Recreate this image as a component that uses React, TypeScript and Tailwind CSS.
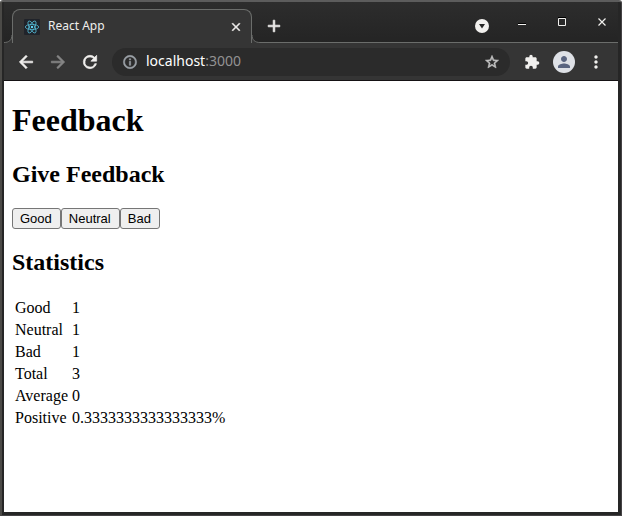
import { useState } from "react";
import type { ReactNode } from "react";
import { MdExtension, MdMoreVert, MdPerson } from "react-icons/md";

const glyphs = {
  back: "M20 11H7.83l5.59-5.59L12 4l-8 8 8 8 1.41-1.41L7.83 13H20v-2z",
  forward: "M12 4l-1.41 1.41L16.17 11H4v2h12.17l-5.58 5.59L12 20l8-8z",
  reload:
    "M17.65 6.35A7.96 7.96 0 0 0 12 4a8 8 0 1 0 7.73 10h-2.08A6 6 0 1 1 12 6c1.66 0 3.14.69 4.22 1.78L13 11h7V4l-2.35 2.35z",
  close: "M19 6.41L17.59 5 12 10.59 6.41 5 5 6.41 10.59 12 5 17.59 6.41 19 12 13.41 17.59 19 19 17.59 13.41 12z",
  add: "M19 13h-6v6h-2v-6H5v-2h6V5h2v6h6v2z",
  info: "M11 7h2v2h-2zm0 4h2v6h-2zm1-9a10 10 0 1 0 0 20 10 10 0 0 0 0-20zm0 18a8 8 0 1 1 0-16 8 8 0 0 1 0 16z",
  star: "M22 9.24l-7.19-.62L12 2 9.19 8.63 2 9.24l5.46 4.73L5.82 21 12 17.27 18.18 21l-1.63-7.03L22 9.24zM12 15.4l-3.76 2.27 1-4.28-3.32-2.88 4.38-.38L12 6.1l1.71 4.04 4.38.38-3.32 2.88 1 4.28L12 15.4z",
};

function Glyph({ name, className }: { name: keyof typeof glyphs; className: string }) {
  return (
    <svg viewBox="0 0 24 24" className={className} fill="currentColor" stroke="currentColor" strokeWidth="0.8" aria-hidden="true">
      <path d={glyphs[name]} />
    </svg>
  );
}

function IconButton({ label, children }: { label: string; children: ReactNode }) {
  return (
    <button type="button" aria-label={label} className="flex size-6 shrink-0 items-center justify-center text-[#f1f0ee]">
      {children}
    </button>
  );
}

function ReactLogo() {
  return (
    <svg viewBox="0 0 16 16" className="size-4 shrink-0" fill="none" stroke="#53b9d4" strokeWidth="0.8" aria-hidden="true">
      <rect width="16" height="16" rx="1" fill="#20232a" stroke="none" />
      <ellipse cx="8" cy="8" rx="6.7" ry="2.6" />
      <ellipse cx="8" cy="8" rx="6.7" ry="2.6" transform="rotate(60 8 8)" />
      <ellipse cx="8" cy="8" rx="6.7" ry="2.6" transform="rotate(120 8 8)" />
      <circle cx="8" cy="8" r="1.2" fill="#61dafb" stroke="none" />
    </svg>
  );
}

function TabStrip() {
  return (
    <div className="flex h-[41px] bg-gradient-to-b from-[#2d2d2d] to-[#242424]">
      <div className="flex shrink-0 items-end">
        <svg viewBox="0 0 8 8" className="size-2" aria-hidden="true">
          <path d="M0 7.5Q7.5 7.5 8 0V8H0Z" fill="#353535" />
          <path d="M0 7.5C5 7.5 8 5 8 0" fill="none" stroke="#6b6d6b" />
        </svg>
        <div className="flex h-[34px] w-[240px] items-center rounded-t-lg border border-b-0 border-[#6b6d6b] bg-[#353535] pr-[7px] pl-[11px]">
          <ReactLogo />
          <span className="ml-2 flex-1 pb-0.5 font-['Noto_Sans',sans-serif] text-xs text-[#eeeeec]">React App</span>
          <button type="button" aria-label="Close tab" className="flex size-4 items-center justify-center text-[#f1f0ee]">
            <Glyph name="close" className="size-3.5" />
          </button>
        </div>
        <svg viewBox="0 0 8 8" className="size-2" aria-hidden="true">
          <path d="M8 7.5Q0.5 7.5 0 0V8H8Z" fill="#353535" />
          <path d="M8 7.5C3 7.5 0 5 0 0" fill="none" stroke="#6b6d6b" />
        </svg>
      </div>
      <div className="flex flex-1 items-center justify-between border-b border-[#6b6d6b] pr-1">
        <div className="pt-[7px] pl-[2px]">
          <IconButton label="New tab">
            <Glyph name="add" className="size-5" />
          </IconButton>
        </div>
        <div className="flex items-center gap-4">
          <div className="pt-[7px]">
            <IconButton label="Search tabs">
              <svg viewBox="0 0 14 14" className="size-3.5">
                <circle cx="7" cy="7" r="7" fill="#f1f0ee" />
                <path d="M4 5H10L7 9.5Z" fill="#252525" />
              </svg>
            </IconButton>
          </div>
          <IconButton label="Minimize">
            <svg viewBox="0 0 10 10" className="size-2.5">
              <path d="M1 6H9V7H1Z" fill="#000" />
              <path d="M1 7H9V8H1Z" fill="currentColor" />
            </svg>
          </IconButton>
          <IconButton label="Maximize">
            <svg viewBox="0 0 10 10" className="size-2.5" fill="none">
              <path d="M1 0.5H9" stroke="#000" />
              <path d="M1.5 1.5H8.5V8.5H1.5Z" stroke="currentColor" />
            </svg>
          </IconButton>
          <IconButton label="Close window">
            <svg viewBox="0 0 10 10" className="size-2.5">
              <path d="M1.5 1.5L8.5 8.5M8.5 1.5L1.5 8.5" stroke="currentColor" strokeWidth="1.2" />
            </svg>
          </IconButton>
        </div>
      </div>
    </div>
  );
}

function Toolbar() {
  return (
    <div className="flex h-[38px] items-center gap-2.5 border-b border-[#151214] bg-[#353535] px-2.5">
      <div className="flex gap-2">
        <IconButton label="Back">
          <Glyph name="back" className="size-5" />
        </IconButton>
        <button type="button" aria-label="Forward" disabled className="flex size-6 items-center justify-center text-[#868686]">
          <Glyph name="forward" className="size-5" />
        </button>
        <IconButton label="Reload">
          <Glyph name="reload" className="size-5" />
        </IconButton>
      </div>
      <div className="flex h-7 min-w-0 flex-1 items-center rounded-full bg-[#2b2b2b] px-2.5">
        <Glyph name="info" className="size-4 shrink-0 text-[#9aa0a6]" />
        <div className="ml-2 flex-1 pb-0.5 font-['Noto_Sans',sans-serif] text-sm text-[#929292]">
          <span className="text-white">localhost</span>:3000
        </div>
        <button type="button" aria-label="Bookmark this page" className="text-[#c4c4c4]">
          <Glyph name="star" className="size-4" />
        </button>
      </div>
      <div className="flex gap-2">
        <IconButton label="Extensions">
          <MdExtension className="size-4" />
        </IconButton>
        <IconButton label="Profile">
          <span className="flex size-[22px] items-center justify-center rounded-full bg-[#dee1e6] text-[#5a6580]">
            <MdPerson className="size-[18px]" />
          </span>
        </IconButton>
        <IconButton label="Menu">
          <MdMoreVert className="size-5" />
        </IconButton>
      </div>
    </div>
  );
}

function FeedbackButton({ label, onClick }: { label: string; onClick: () => void }) {
  return (
    <button
      type="button"
      onClick={onClick}
      className="h-[21px] rounded-[3px] border border-[#767676] bg-[#efefef] pr-2 pl-[7px] font-['Liberation_Sans',Arial,sans-serif] text-[13px] leading-[19px] text-black"
    >
      {label}
    </button>
  );
}

function FeedbackPage() {
  const [good, setGood] = useState(1);
  const [neutral, setNeutral] = useState(1);
  const [bad, setBad] = useState(1);
  const total = good + neutral + bad;
  const rows: [string, string | number][] = [
    ["Good", good],
    ["Neutral", neutral],
    ["Bad", bad],
    ["Total", total],
    ["Average", (good - bad) / total],
    ["Positive", `${good / total}%`],
  ];

  return (
    <main className="flex-1 bg-white px-2 pt-[21px] font-['Liberation_Serif','Times_New_Roman',serif] text-base text-black">
      <h1 className="mb-[22px] text-[32px] leading-[37px] font-bold">Feedback</h1>
      <h2 className="mb-5 text-2xl leading-[27px] font-bold">Give Feedback</h2>
      <div className="flex">
        <FeedbackButton label="Good" onClick={() => setGood(good + 1)} />
        <FeedbackButton label="Neutral" onClick={() => setNeutral(neutral + 1)} />
        <FeedbackButton label="Bad" onClick={() => setBad(bad + 1)} />
      </div>
      <h2 className="my-5 text-2xl leading-[27px] font-bold">Statistics</h2>
      <table className="border-separate border-spacing-[2px] leading-[18px]">
        <tbody>
          {rows.map(([name, value]) => (
            <tr key={name}>
              <td className="p-px">{name}</td>
              <td className="p-px">{value}</td>
            </tr>
          ))}
        </tbody>
      </table>
    </main>
  );
}

export default function App() {
  return (
    <div className="flex min-h-screen flex-col rounded-t-[3px] border-t-2 border-r border-b border-l-2 border-t-[#5c5c5c] border-r-[#454345] border-b-[#454345] border-l-[#4b4a47] bg-[#262626] pr-[3px] pb-[3px] pl-0.5">
      <TabStrip />
      <Toolbar />
      <FeedbackPage />
    </div>
  );
}
